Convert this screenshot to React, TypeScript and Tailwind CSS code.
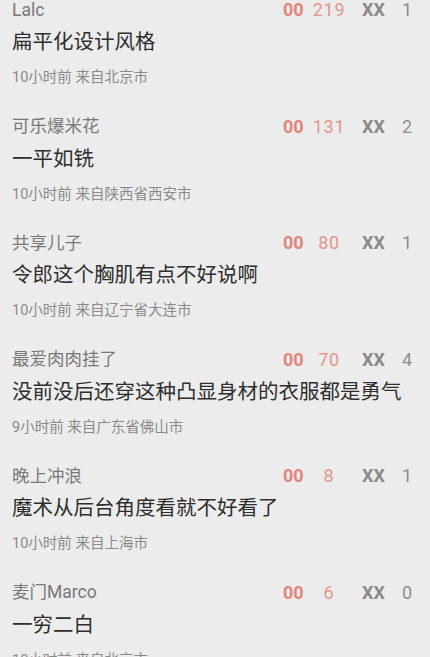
const comments = [
  { name: "Lalc", text: "扁平化设计风格", meta: "10小时前 来自北京市", likes: 219, replies: 1 },
  { name: "可乐爆米花", text: "一平如铣", meta: "10小时前 来自陕西省西安市", likes: 131, replies: 2 },
  { name: "共享儿子", text: "令郎这个胸肌有点不好说啊", meta: "10小时前 来自辽宁省大连市", likes: 80, replies: 1 },
  { name: "最爱肉肉挂了", text: "没前没后还穿这种凸显身材的衣服都是勇气", meta: "9小时前 来自广东省佛山市", likes: 70, replies: 4 },
  { name: "晚上冲浪", text: "魔术从后台角度看就不好看了", meta: "10小时前 来自上海市", likes: 8, replies: 1 },
  { name: "麦门Marco", text: "一穷二白", meta: "10小时前 来自北京市", likes: 6, replies: 0 },
];

export default function App() {
  return (
    <div
      className="h-[657px] w-[430px] overflow-hidden bg-[#ececec]"
      style={{ fontFamily: 'Roboto, "Noto Sans CJK SC", sans-serif' }}
    >
      <div className="-mt-[12px]">
        {comments.map((c) => (
          <div key={c.name} className="h-[116.5px] pl-[12px] pr-[13px] pt-[10px]">
            <div className="flex h-[24px] items-center justify-between">
              <span className="text-[17.5px] text-[#787878]">{c.name}</span>
              <div className="flex items-center text-[18px] leading-none">
                <span className="w-[20px] font-bold text-[#e0877a]">00</span>
                <span className="ml-[6px] w-[40px] text-center tracking-[0.04em] text-[#e3978b]">{c.likes}</span>
                <span className="ml-[13px] w-[21px] font-bold text-[#8a8a8a]">XX</span>
                <span className="ml-[14px] w-[20px] text-center text-[#8c8c8c]">{c.replies}</span>
              </div>
            </div>
            <div className="mt-[6px] h-[28px] text-[20.5px] leading-[28px] whitespace-nowrap text-[#2e2e2e]">
              {c.text}
            </div>
            <div className="mt-[12px] h-[20px] text-[14.5px] leading-[20px] text-[#8a8a8a]">{c.meta}</div>
          </div>
        ))}
      </div>
    </div>
  );
}
